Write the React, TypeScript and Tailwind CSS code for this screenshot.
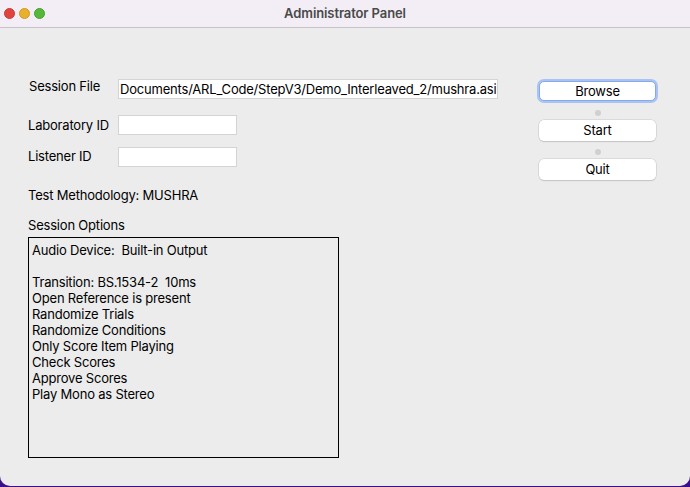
export default function App() {
    const options = [
        'Audio Device:  Built-in Output',
        '',
        'Transition: BS.1534-2  10ms',
        'Open Reference is present',
        'Randomize Trials',
        'Randomize Conditions',
        'Only Score Item Playing',
        'Check Scores',
        'Approve Scores',
        'Play Mono as Stereo',
    ];

    return (
        <div
            className="w-[690px] h-[487px] bg-[#3b0f8c] overflow-hidden"
            style={{ fontFamily: 'Inter, "Liberation Sans", sans-serif' }}
        >
            <div className="w-[690px] h-[486px] bg-[#ececec] rounded-b-[10px] flex flex-col overflow-hidden">
                {/* TITLE BAR */}
                <div className="h-[28px] shrink-0 bg-[#f3eef5] border-b border-[#c6c4c8] flex items-center relative">
                    <div className="flex items-center gap-[4px] pl-[4px]">
                        <span className="w-[11px] h-[11px] rounded-full bg-[#e0443e] border border-[#c93a35]" />
                        <span className="w-[11px] h-[11px] rounded-full bg-[#e9b02c] border border-[#d09a22]" />
                        <span className="w-[11px] h-[11px] rounded-full bg-[#55b83a] border border-[#46a12f]" />
                    </div>
                    <div className="absolute inset-0 flex items-center justify-center text-[13px] font-semibold text-[#4a4a4a] tracking-[-0.1px]">
                        Administrator Panel
                    </div>
                </div>

                {/* CONTENT */}
                <div className="flex pl-[28px] pt-[51px] text-[13px] text-black tracking-[-0.2px]">
                    <div className="flex flex-col w-[470px]">
                        <div className="flex items-center h-[20px]">
                            <span className="w-[90px] pl-[1px] -mt-[4px]">Session File</span>
                            <div className="w-[380px] h-[20px] bg-white border border-[#d4d4d4] pl-[1px] leading-[18px] whitespace-nowrap overflow-hidden">
                                Documents/ARL_Code/StepV3/Demo_Interleaved_2/mushra.asi
                            </div>
                        </div>
                        <div className="flex items-center h-[20px] mt-[16px]">
                            <span className="w-[90px] mt-[1px]">Laboratory ID</span>
                            <div className="w-[119px] h-[20px] bg-white border border-[#d4d4d4]" />
                        </div>
                        <div className="flex items-center h-[20px] mt-[12px]">
                            <span className="w-[90px]">Listener ID</span>
                            <div className="w-[119px] h-[20px] bg-white border border-[#d4d4d4]" />
                        </div>
                        <div className="mt-[20px] leading-[16px]">Test Methodology: MUSHRA</div>
                        <div className="mt-[14px] leading-[16px]">Session Options</div>
                        <div className="mt-[4px] w-[311px] h-[221px] border border-black px-[3px] pt-[4px] leading-[16px]">
                            {options.map((o, i) => (
                                <div key={i} className="h-[16px] whitespace-pre">
                                    {o}
                                </div>
                            ))}
                        </div>
                    </div>

                    {/* BUTTONS */}
                    <div className="flex flex-col items-center ml-[41px] pt-[2px]">
                        <button className="w-[117px] h-[20px] bg-white rounded-[5px] border border-[#86a9ea] ring-[2px] ring-[#a8c3f4] leading-[18px]">
                            Browse
                        </button>
                        <span className="w-[6px] h-[6px] rounded-full bg-[#d0d0d0] mt-[9px] mb-[4px]" />
                        <button className="w-[117px] h-[21px] bg-white rounded-[5px] shadow-[0_0_0_0.5px_#c8c8c8,0_1px_1px_#c4c4c4] leading-[21px]">
                            Start
                        </button>
                        <span className="w-[6px] h-[6px] rounded-full bg-[#d0d0d0] mt-[8px] mb-[4px]" />
                        <button className="w-[117px] h-[21px] bg-white rounded-[5px] shadow-[0_0_0_0.5px_#c8c8c8,0_1px_1px_#c4c4c4] leading-[21px]">
                            Quit
                        </button>
                    </div>
                </div>
            </div>
        </div>
    );
}
